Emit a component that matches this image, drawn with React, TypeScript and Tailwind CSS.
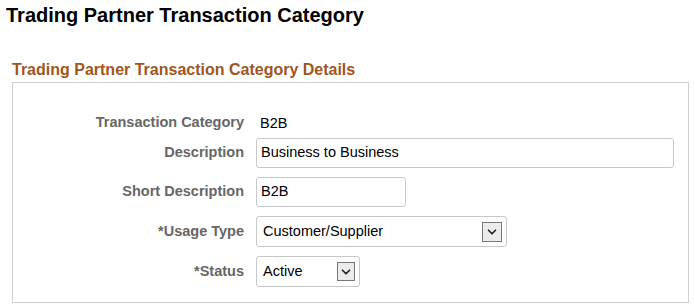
import { ChevronDown } from "lucide-react";

const font = { fontFamily: '"Liberation Sans", Arial, sans-serif' };

function Arrow({ size }: { size: string }) {
  return (
    <span className={`flex items-center justify-center border border-[#777] bg-[#ececec] ${size}`}>
      <ChevronDown size={14} strokeWidth={3} color="#222" />
    </span>
  );
}

function Row({ label, children, className = "" }: { label: string; children: React.ReactNode; className?: string }) {
  return (
    <div className={`flex items-center ${className}`}>
      <div className="w-[231px] text-right text-[14.5px] font-bold text-[#666]">{label}</div>
      <div className="ml-[12px]">{children}</div>
    </div>
  );
}

export default function App() {
  return (
    <div className="w-[695px] h-[306px] bg-white" style={font}>
      <h1 className="pl-[6px] pt-[4px] text-[20px] leading-[22px] font-bold text-black">
        Trading Partner Transaction Category
      </h1>
      <div className="pl-[12px] pr-[6px] pt-[34px]">
        <h2 className="text-[16px] leading-[20px] font-bold text-[#a0561e]">
          Trading Partner Transaction Category Details
        </h2>
        <div className="mt-[2px] h-[221px] border border-[#cfcfcf] pt-[31px]">
          <div className="flex flex-col gap-[9px]">
            <Row label="Transaction Category" className="h-[18px] mb-[-3px]">
              <span className="pl-[4px] text-[14.5px] text-black leading-[18px]">B2B</span>
            </Row>
            <Row label="Description">
              <div className="flex h-[30px] w-[418px] items-center rounded-[3px] border border-[#c8c8c8] px-[4px] text-[14.5px] text-black">
                Business to Business
              </div>
            </Row>
            <Row label="Short Description">
              <div className="flex h-[30px] w-[150px] items-center rounded-[3px] border border-[#c8c8c8] px-[4px] text-[14.5px] text-black">
                B2B
              </div>
            </Row>
            <Row label="*Usage Type">
              <div className="flex h-[31px] w-[251px] items-center justify-between rounded-[3px] border border-[#c8c8c8] pl-[6px] pr-[4px] text-[14.5px] text-black">
                <span>Customer/Supplier</span>
                <Arrow size="w-[20px] h-[20px]" />
              </div>
            </Row>
            <Row label="*Status">
              <div className="flex h-[31px] w-[104px] items-center justify-between rounded-[3px] border border-[#c8c8c8] pl-[6px] pr-[4px] text-[14.5px] text-black">
                <span>Active</span>
                <Arrow size="w-[18px] h-[19px]" />
              </div>
            </Row>
          </div>
        </div>
      </div>
    </div>
  );
}
